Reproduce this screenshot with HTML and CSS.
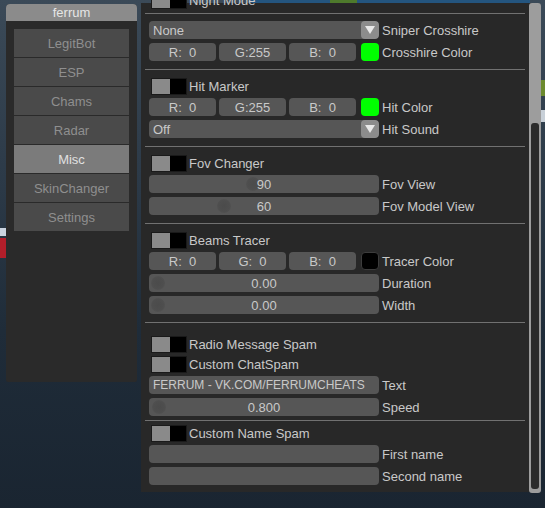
FILE: index.html
```html
<!DOCTYPE html>
<html>
<head>
<meta charset="utf-8">
<link rel="stylesheet" href="styles.css">
</head>
<body>
<div class="scene">
  <div class="game">
    <span class="g g-top"></span>
    <span class="g g-green"></span>
    <span class="g g-right1"></span>
    <span class="g g-right2"></span>
    <span class="g g-left1"></span>
    <span class="g g-left2"></span>
  </div>

  <div class="win nav-win">
    <div class="title">ferrum</div>
    <div class="nav">
      <div class="nav-btn">LegitBot</div>
      <div class="nav-btn">ESP</div>
      <div class="nav-btn">Chams</div>
      <div class="nav-btn">Radar</div>
      <div class="nav-btn active">Misc</div>
      <div class="nav-btn">SkinChanger</div>
      <div class="nav-btn">Settings</div>
    </div>
  </div>

  <div class="win main-win">
    <div class="content">
      <div class="row trow night"><span class="toggle"><i></i></span><span class="lbl tl">Night Mode</span></div>
      <div class="sep"></div>

      <div class="sec s1">
        <div class="row"><div class="field combo"><span class="val">None</span><span class="arrow"></span></div><span class="lbl">Sniper Crosshire</span></div>
        <div class="row"><div class="rgb"><div class="cbox">R:  0</div><div class="cbox">G:255</div><div class="cbox">B:  0</div></div><span class="swatch green"></span><span class="lbl">Crosshire Color</span></div>
      </div>
      <div class="sep"></div>

      <div class="sec">
        <div class="row trow"><span class="toggle"><i></i></span><span class="lbl tl">Hit Marker</span></div>
        <div class="row"><div class="rgb"><div class="cbox">R:  0</div><div class="cbox">G:255</div><div class="cbox">B:  0</div></div><span class="swatch green"></span><span class="lbl">Hit Color</span></div>
        <div class="row"><div class="field combo"><span class="val">Off</span><span class="arrow"></span></div><span class="lbl">Hit Sound</span></div>
      </div>
      <div class="sep"></div>

      <div class="sec">
        <div class="row trow"><span class="toggle"><i></i></span><span class="lbl tl">Fov Changer</span></div>
        <div class="row"><div class="field slider"><span class="grab" style="left:97px"></span><span class="sv">90</span></div><span class="lbl">Fov View</span></div>
        <div class="row"><div class="field slider"><span class="grab" style="left:68px"></span><span class="sv">60</span></div><span class="lbl">Fov Model View</span></div>
      </div>
      <div class="sep"></div>

      <div class="sec">
        <div class="row trow"><span class="toggle"><i></i></span><span class="lbl tl">Beams Tracer</span></div>
        <div class="row"><div class="rgb"><div class="cbox">R:  0</div><div class="cbox">G:  0</div><div class="cbox">B:  0</div></div><span class="swatch black"></span><span class="lbl">Tracer Color</span></div>
        <div class="row"><div class="field slider"><span class="grab" style="left:2px"></span><span class="sv">0.00</span></div><span class="lbl">Duration</span></div>
        <div class="row"><div class="field slider"><span class="grab" style="left:2px"></span><span class="sv">0.00</span></div><span class="lbl">Width</span></div>
      </div>
      <div class="sep"></div>

      <div class="sec s5">
        <div class="row trow"><span class="toggle"><i></i></span><span class="lbl tl">Radio Message Spam</span></div>
        <div class="row trow"><span class="toggle"><i></i></span><span class="lbl tl">Custom ChatSpam</span></div>
        <div class="row"><div class="field text"><span class="val">FERRUM - VK.COM/FERRUMCHEATS</span></div><span class="lbl">Text</span></div>
        <div class="row"><div class="field slider"><span class="grab" style="left:3px"></span><span class="sv">0.800</span></div><span class="lbl">Speed</span></div>
      </div>
      <div class="sep"></div>

      <div class="sec s6">
        <div class="row trow"><span class="toggle"><i></i></span><span class="lbl tl">Custom Name Spam</span></div>
        <div class="row"><div class="field text"></div><span class="lbl">First name</span></div>
        <div class="row"><div class="field text"></div><span class="lbl">Second name</span></div>
      </div>
    </div>
    <div class="scrollbar"><div class="track"></div></div>
  </div>
</div>
</body>
</html>
```

FILE: styles.css
```css
html, body {
  margin: 0;
  padding: 0;
}

body {
  width: 545px;
  height: 508px;
  overflow: hidden;
  font-family: "Liberation Sans", Arial, sans-serif;
  font-size: 13px;
  background: linear-gradient(180deg, #3b4a58 0%, #2c3a48 35%, #1f2c39 65%, #1a2531 100%);
}

.scene {
  position: relative;
  width: 545px;
  height: 508px;
}

/* game backdrop bits */
.game .g {
  position: absolute;
  display: block;
}
.g-top { left: 250px; top: 0; width: 280px; height: 3px; background: #24557f; }
.g-green { left: 330px; top: 0; width: 27px; height: 3px; background: #4e7a2c; }
.g-right1 { left: 541px; top: 80px; width: 4px; height: 16px; background: #6c8a2e; }
.g-right2 { left: 541px; top: 110px; width: 4px; height: 12px; background: #c8d0d8; }
.g-left1 { left: 0; top: 238px; width: 6px; height: 20px; background: #b21e2a; }
.g-left2 { left: 0; top: 228px; width: 6px; height: 8px; background: #c9d3df; }

.win {
  position: absolute;
}

/* left navigation window */
.nav-win {
  left: 6px;
  top: 4px;
  width: 131px;
  height: 378px;
  background: #2a2a2a;
  border-radius: 4px 4px 2px 2px;
}

.title {
  height: 17px;
  line-height: 17px;
  background: #8b8b8b;
  color: #e6e6e6;
  text-align: center;
  border-radius: 4px 4px 0 0;
}

.nav {
  padding: 8px;
  display: flex;
  flex-direction: column;
  gap: 1px;
}

.nav-btn {
  height: 28px;
  background: #4a4a4a;
  color: #8f8f8f;
  display: flex;
  align-items: center;
  justify-content: center;
}

.nav-btn.active {
  background: #7b7b7b;
  color: #e0e0e0;
}

/* main window */
.main-win {
  left: 141px;
  top: 3px;
  width: 400px;
  height: 489px;
  display: flex;
  background: #282828;
  border-radius: 0 4px 4px 0;
}

.content {
  width: 388px;
  padding-left: 8px;
  box-sizing: border-box;
}

.scrollbar {
  width: 12px;
  height: 490px;
  box-sizing: border-box;
  padding: 120px 2px 4px;
  background: #9d9d9d;
  border-radius: 3px;
}

.track {
  height: 100%;
  background: #2b2b2b;
  border-radius: 3px;
}

.sep {
  height: 1px;
  background: #717171;
  margin: 0 4px 0 -4px;
}

.night {
  margin-top: -11px;
  margin-bottom: 4px;
}

.sec {
  display: flex;
  flex-direction: column;
  gap: 4px;
  padding: 8px 0;
}

.s1 { padding-top: 7px; }
.s5 { padding-top: 13px; padding-bottom: 4px; }
.s6 { padding-top: 4px; padding-bottom: 0; }

.row {
  display: flex;
  align-items: center;
  height: 18px;
}

.trow {
  height: 17px;
}
.sec .trow {
  margin-bottom: -1px;
}

.toggle {
  width: 36px;
  height: 17px;
  box-sizing: border-box;
  margin-left: 2px;
  background: #000;
  border: 1px solid #1a1a1a;
  display: flex;
}

.toggle i {
  width: 18px;
  background: #8a8a8a;
}

.lbl {
  margin-left: 3px;
  color: #c9c9c9;
  white-space: nowrap;
}

.lbl.tl {
  margin-left: 2px;
}

.field {
  position: relative;
  width: 230px;
  height: 18px;
  box-sizing: border-box;
  background: #565656;
  border-radius: 4px;
  color: #c9c9c9;
  display: flex;
  align-items: center;
  white-space: nowrap;
  overflow: hidden;
}

.val {
  padding-left: 4px;
}

.arrow {
  margin-left: auto;
  width: 18px;
  height: 18px;
  background: #8c8c8c;
  border-radius: 4px;
  display: flex;
  align-items: center;
  justify-content: center;
}

.arrow::before {
  content: "";
  display: block;
  width: 0;
  height: 0;
  border-left: 5px solid transparent;
  border-right: 5px solid transparent;
  border-top: 8px solid #e8e8e8;
}

.rgb {
  display: flex;
  gap: 3px;
}

.cbox {
  width: 67px;
  height: 18px;
  background: #565656;
  border-radius: 4px;
  color: #c9c9c9;
  display: flex;
  align-items: center;
  justify-content: center;
  white-space: pre;
}

.swatch {
  width: 18px;
  height: 18px;
  box-sizing: border-box;
  margin-left: 5px;
  border-radius: 4px;
}

.swatch.green { background: #00ff00; }
.swatch.black { background: #000; border: 1px solid #3c3c3c; }

.slider {
  justify-content: center;
}

.grab {
  position: absolute;
  top: 2px;
  width: 14px;
  height: 14px;
  border-radius: 50%;
  background: radial-gradient(circle, #4b4b4b 0%, #4e4e4e 55%, #565656 100%);
}

.sv {
  position: relative;
}

.text .val {
  font-size: 12px;
}
```
